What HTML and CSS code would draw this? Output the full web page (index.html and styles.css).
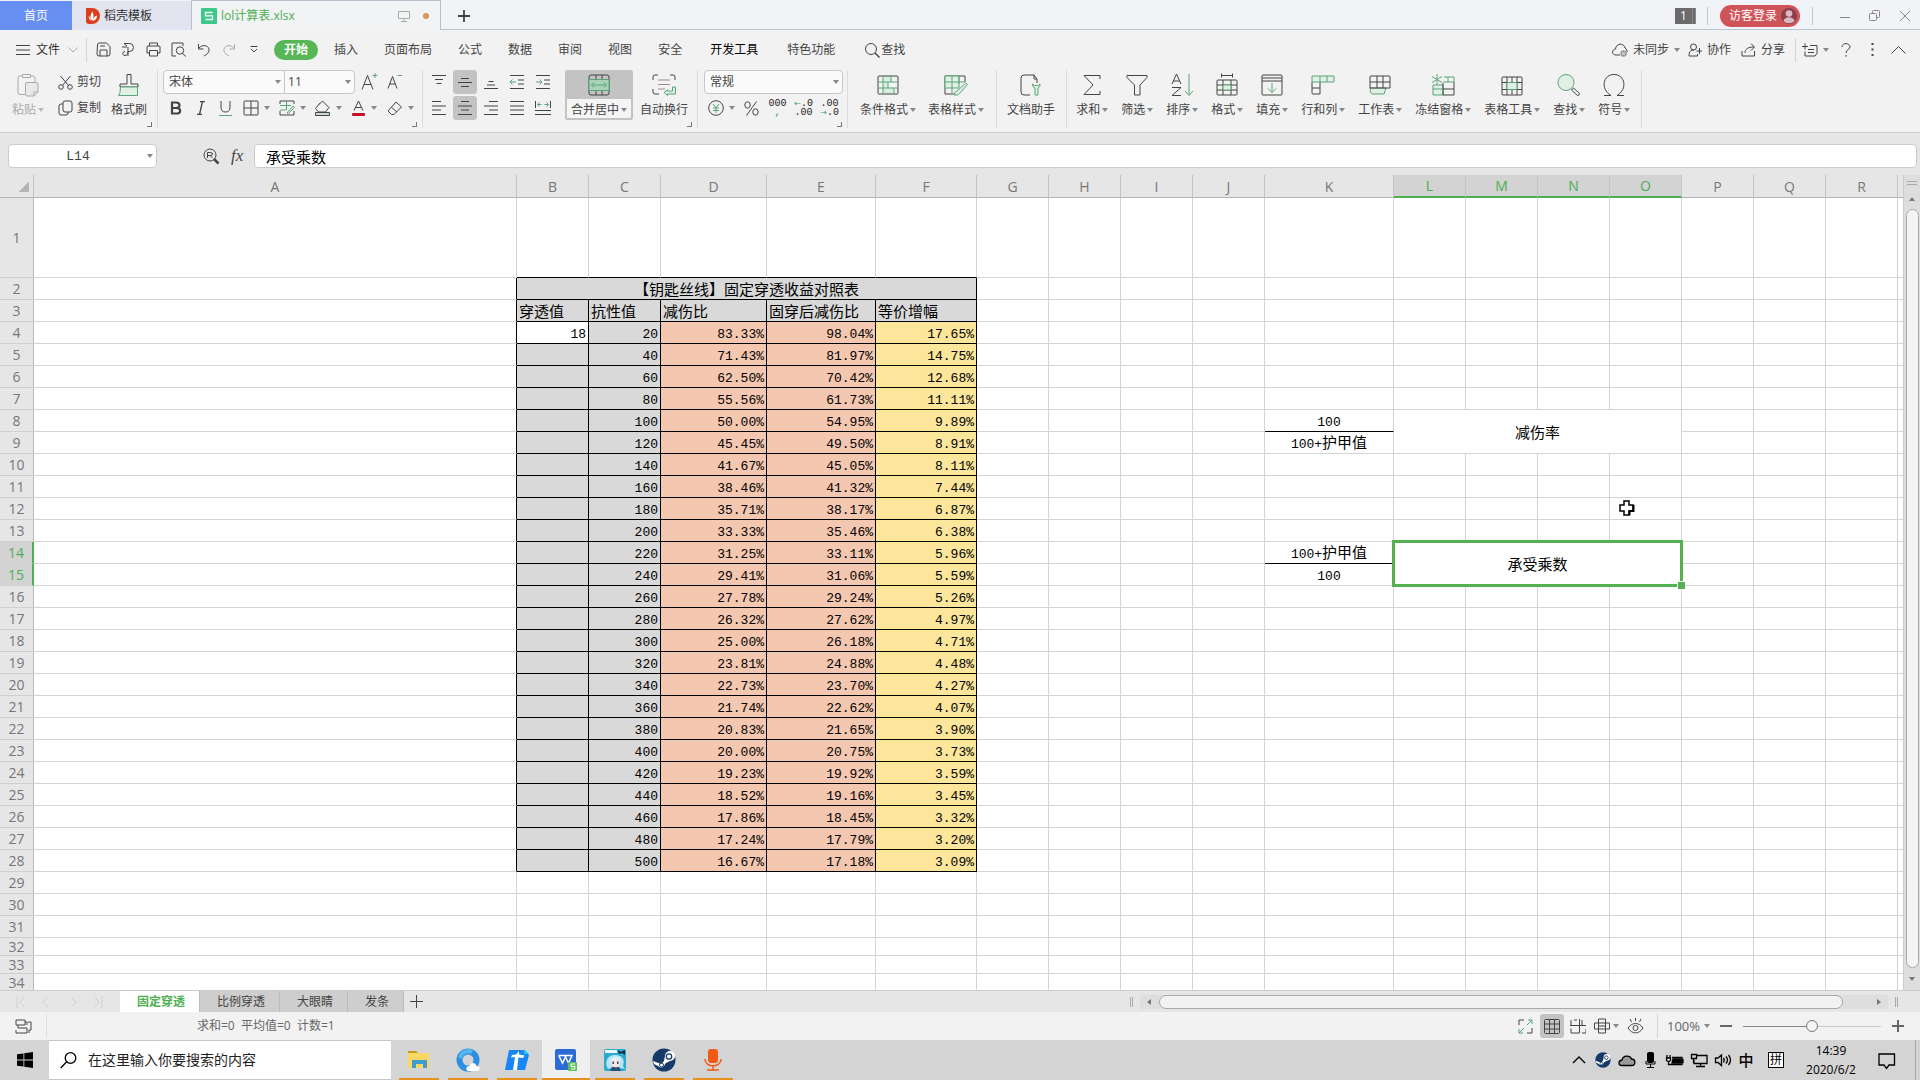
FILE: index.html
```html
<!DOCTYPE html>
<html lang="zh-CN">
<head>
<meta charset="utf-8">
<title>lol计算表.xlsx</title>
<link rel="stylesheet" href="styles.css">
</head>
<body>
<header class="titlebar">
  <button class="tab tab-home">首页</button>
  <button class="tab tab-docer">
    <svg width="14" height="16" viewBox="0 0 14 16"><path d="M0 0h6a8 8 0 0 1 0 16H3a3 3 0 0 1-3-3z" fill="#dd3d1f"/><path d="M6.500 12.500C4 11 3.500 8 6.500 3.500c1 3 1.500 5 0 9zM6.500 13c.5-3 2-5 4.500-5.500 0 3-1.500 5-4.500 5.500zM5.500 13C3.500 12 2.500 10 2.800 7.500" fill="#fff"/></svg>
    稻壳模板</button>
  <div class="tab tab-file">
    <svg width="16" height="16" viewBox="0 0 16 16"><rect width="16" height="16" rx="1" fill="#3dc78a"/><path d="M11.500 4.500h-7v3.300h7v3.700h-7" fill="none" stroke="#fff" stroke-width="1.300"/></svg>
    <span class="grow">lol计算表.xlsx</span>
    <svg width="12" height="12" viewBox="0 0 12 12" class="ln pale"><path d="M.5 1.500h11v7H.5zM6 8.500v3M3 11.500h6"/></svg>
    <i class="dot"></i>
  </div>
  <button class="newtab" aria-label="新建"><svg width="12" height="12" viewBox="0 0 12 12" class="ln"><path d="M6 0v12M0 6h12" stroke-width="1.800"/></svg></button>
  <div class="grow"></div>
  <span class="count"><b>1</b></span>
  <i class="vsep short"></i>
  <button class="login">访客登录
    <svg width="16" height="16" viewBox="0 0 16 16"><circle cx="8" cy="8" r="8" fill="#8d3e4c"/><circle cx="8" cy="5.500" r="3.300" fill="#dcb9c2"/><path d="M2.500 13c1-5 10-5 11 0a8 8 0 0 1-11 0z" fill="#dcb9c2"/></svg>
  </button>
  <i class="vsep short"></i>
  <button class="win" aria-label="最小化"><svg width="10" height="12" viewBox="0 0 10 12" class="ln gray"><path d="M0 7.500h10"/></svg></button>
  <button class="win" aria-label="还原"><svg width="12" height="12" viewBox="0 0 12 12" class="ln gray"><rect x=".5" y="3.500" width="7" height="7" rx="1"/><path d="M3.500 3V1.500q0-1 1-1h5q1 0 1 1v5q0 1-1 1H8"/></svg></button>
  <button class="win" aria-label="关闭"><svg width="12" height="12" viewBox="0 0 12 12" class="ln gray"><path d="M1 1l10 10M11 1L1 11"/></svg></button>
</header>

<nav class="menubar">
  <button class="filebtn"><svg width="14" height="12" viewBox="0 0 14 12" class="ln"><path d="M0 1.500h14M0 6h14M0 10.500h14"/></svg>文件<svg width="10" height="6" viewBox="0 0 10 6" class="ln pale chev"><path d="M.5.5L5 5 9.500.5"/></svg></button>
  <i class="vsep"></i>
  <div class="quick">
    <button aria-label="保存"><svg width="15" height="15" viewBox="0 0 15 15" class="ln"><path d="M1.500 3q0-2 2-2h7l3.500 3.500V12q0 2-2 2H3q-2 0-2-2zM4 14V8h7v6M4 4h5"/></svg></button>
    <button aria-label="输出为PDF"><svg width="15" height="15" viewBox="0 0 15 15" class="ln"><path d="M3 1.500h5.500a4 4 0 0 1 0 8H7M3 1.500L6 4M7 14V5M4 9.500c-3 0-3 4 0 4 2 0 3-1.500 3-4M1 5h5"/></svg></button>
    <button aria-label="打印"><svg width="15" height="15" viewBox="0 0 15 15" class="ln"><path d="M3.500 4V1h8v3M3.500 11H1V5q0-1 1-1h11q1 0 1 1v6h-2.500M3.500 8.500h8V14h-8z"/></svg></button>
    <button aria-label="打印预览"><svg width="16" height="15" viewBox="0 0 16 15" class="ln"><path d="M5 14H1V1h11v3"/><circle cx="9" cy="8.500" r="3.700"/><path d="M11.500 11.500L15 14.500"/></svg></button>
    <button aria-label="撤销"><svg width="14" height="14" viewBox="0 0 14 14" class="ln"><path d="M1.500 1v5h5M1.500 5.500C6 0 13 3 12 8c-.4 2-3 4-5 5"/></svg></button>
    <button aria-label="恢复"><svg width="14" height="14" viewBox="0 0 14 14" class="ln pale"><path d="M12.500 1v5h-5M12.500 5.500C8 0 1 3 2 8c.4 2 3 4 5 5"/></svg></button>
    <button aria-label="自定义"><svg width="8" height="8" viewBox="0 0 8 8" class="ln"><path d="M.5.500h7M1 3l3 3 3-3"/></svg></button>
  </div>
  <button class="menu on">开始</button>
  <button class="menu">插入</button>
  <button class="menu">页面布局</button>
  <button class="menu">公式</button>
  <button class="menu">数据</button>
  <button class="menu">审阅</button>
  <button class="menu">视图</button>
  <button class="menu">安全</button>
  <button class="menu wide dark">开发工具</button>
  <button class="menu wide">特色功能</button>
  <button class="menu wide find"><svg width="16" height="16" viewBox="0 0 16 16" class="ln"><circle cx="7" cy="7" r="5.500"/><path d="M11 11l4.500 4.500" stroke-width="1.500"/></svg>查找</button>
  <div class="grow"></div>
  <button class="side sync"><svg width="16" height="14" viewBox="0 0 16 14" class="ln"><path d="M8 12H4C-.5 12-.5 6.500 3.500 6 4 0 12-.5 13 5c2 1 2.500 3 1.500 4.500"/><circle cx="11.500" cy="10.500" r="3.200" fill="#999" stroke="none"/><path d="M10.300 9.300l2.400 2.400M12.700 9.300l-2.400 2.400" stroke="#fff"/></svg>未同步<i class="caret"></i></button>
  <button class="side"><svg width="14" height="14" viewBox="0 0 14 14" class="ln"><circle cx="5.500" cy="4" r="3"/><path d="M1 13c0-5 2-6 5-6M1 13h8.500v-2M11.500 5v6M8.500 8H14"/></svg>协作</button>
  <button class="side"><svg width="15" height="14" viewBox="0 0 15 14" class="ln"><path d="M1 8v5h12.500V8M4 10c0-4 3-6 9-6M10 .5L13.500 4 10 7.500"/></svg>分享</button>
  <i class="vsep"></i>
  <button class="side addnote" aria-label="批注"><svg width="16" height="14" viewBox="0 0 16 14" class="ln"><path d="M0 3.500h6M3 .5v6M8 2.500h7v8l-2 2.500H3V8.500M6 6.500h6M6 9.500h6"/></svg><i class="caret"></i></button>
  <button class="side help" aria-label="帮助"><svg width="10" height="14" viewBox="0 0 10 14" class="ln"><path d="M1 4c0-4.500 8-4.500 8 0C9 6.500 5 6.500 5 10M5 12v1.800"/></svg></button>
  <button class="side more" aria-label="更多"><svg width="3" height="13" viewBox="0 0 3 13"><path d="M.5 0h2v2h-2zM.5 5.500h2v2h-2zM.5 11h2v2h-2z" fill="#444"/></svg></button>
  <button class="side fold" aria-label="折叠"><svg width="15" height="8" viewBox="0 0 15 8" class="ln"><path d="M.5 7.500l7-7 7 7"/></svg></button>
</nav>

<section class="ribbon">
  <div class="group clip">
    <button class="big off"><svg width="22" height="24" viewBox="0 0 22 24" class="ln"><path d="M8 21.500H3q-2 0-2-2V5q0-2 2-2h2M14 3h2q2 0 2 2v4M5.500 1.500h8v3h-8z"/><path d="M8.500 11q0-1.500 1.500-1.500h9.500q1.500 0 1.500 1.500v8l-4 4h-7q-1.500 0-1.500-1.500zM21 19h-4v4" fill="#e8e8e8"/></svg><span>粘贴<i class="caret"></i></span></button>
    <div class="stack">
      <button class="small"><svg width="15" height="15" viewBox="0 0 15 15" class="ln"><circle cx="3" cy="12" r="2.300"/><circle cx="12" cy="12" r="2.300"/><path d="M4.500 10.500L12.500 1M10.500 10.500L2.500 1"/></svg>剪切</button>
      <button class="small"><svg width="15" height="16" viewBox="0 0 15 16" class="ln"><rect x="5" y="1" width="9" height="11" rx="2"/><path d="M5 4H3Q1 4 1 6v7q0 2 2 2h5q2 0 2-2v-1"/></svg>复制</button>
    </div>
    <button class="big"><svg width="22" height="24" viewBox="0 0 22 24" class="ln"><path d="M9 1.500h4V11h7v3H2v-3h7z"/><path d="M2.500 14h17v8.500h-19Q2.500 21 2.500 14z" class="g"/></svg><span>格式刷</span></button>
    <i class="corner"></i>
  </div>
  <div class="group font">
    <div class="row">
      <label class="combo name"><select aria-label="字体"><option>宋体</option></select><i class="caret"></i></label>
      <label class="combo size"><select aria-label="字号"><option>11</option></select><i class="caret"></i></label>
      <button class="tool" aria-label="增大字号"><svg width="17" height="18" viewBox="0 0 17 18" class="ln"><path d="M1 16.500L6.500 2.500 12 16.500M3 11.500h7"/><path d="M14 0v5M11.500 2.500h5" class="gl"/></svg></button>
      <button class="tool" aria-label="减小字号"><svg width="17" height="18" viewBox="0 0 17 18" class="ln"><path d="M2 15.500L6.500 3.500 11 15.500M3.500 11h6"/><path d="M11.500 2.500h4.500" class="gl"/></svg></button>
    </div>
    <div class="row">
      <button class="tool" aria-label="加粗"><svg width="12" height="14" viewBox="0 0 12 14" class="ln"><path d="M2 1.500h4q3.500 0 3.500 2.700T6 7H2zM2 7h4.500q3.700 0 3.700 2.800T6.500 12.500H2z" stroke-width="2.200"/></svg></button>
      <button class="tool" aria-label="倾斜"><svg width="10" height="14" viewBox="0 0 10 14" class="ln"><path d="M4 .5h5M1 13.500h5M6.500.5l-3 13" stroke-width="1.300"/></svg></button>
      <button class="tool" aria-label="下划线"><svg width="13" height="15" viewBox="0 0 13 15" class="ln"><path d="M2 0v6q0 5 4.500 5T11 6V0"/><path d="M0 14.500h13" class="gl"/></svg></button>
      <button class="tool drop" aria-label="边框"><svg width="16" height="16" viewBox="0 0 16 16" class="ln"><rect x="1" y="1" width="14" height="14" rx="1"/><path d="M8 1v14M1 8h14"/></svg><i class="caret"></i></button>
      <button class="tool drop" aria-label="绘图边框"><svg width="16" height="16" viewBox="0 0 16 16" class="ln"><path d="M15 4V1H1v3M1 11v4h14v-4"/><path d="M1 5.500h11M1 10h6M7.500 1v9" class="gl"/><path d="M8 13l6-7 1.500 1.500-6 6z" class="g"/></svg><i class="caret"></i></button>
      <button class="tool drop" aria-label="填充颜色"><svg width="17" height="16" viewBox="0 0 17 16" class="ln"><path d="M5 4.500L8.500 1l6.500 6.500M6 3L1.500 8.500 4.500 12h7l3.500-4.500"/><path d="M1.500 12.500h14v3h-14z" fill="#c9dccf"/></svg><i class="caret"></i></button>
      <button class="tool drop" aria-label="字体颜色"><svg width="15" height="16" viewBox="0 0 15 16" class="ln"><path d="M3 10.500L7.500 1 12 10.500M4.500 7.500h6"/><rect x="1" y="13" width="13" height="3" rx="1" fill="#c8102e" stroke="none"/></svg><i class="caret"></i></button>
      <button class="tool drop" aria-label="清除"><svg width="16" height="16" viewBox="0 0 16 16" class="ln"><path d="M9 2l5.500 5L7 14.500H4.500L1 11zM4.500 7.500l5.500 4.500"/></svg><i class="caret"></i></button>
    </div>
    <i class="corner"></i>
  </div>
  <div class="group align">
    <div class="pads">
      <button><svg width="14" height="14" viewBox="0 0 14 14" class="ln"><path d="M0 .5h14M3 4.500h8M4.500 8.500h5"/></svg></button>
      <button class="on"><svg width="14" height="14" viewBox="0 0 14 14" class="ln"><path d="M3 3.500h8M0 7.500h14M3 11.500h8"/></svg></button>
      <button><svg width="14" height="14" viewBox="0 0 14 14" class="ln"><path d="M4.500 6.500h5M3 10h8M0 13.500h14"/></svg></button>
      <button><svg width="14" height="14" viewBox="0 0 14 14" class="ln"><path d="M0 .5h14M8 5h6M8 9h6M0 13.500h14"/><path d="M0 7h6M2.500 4.500L0 7l2.500 2.500" class="gl"/></svg></button>
      <button><svg width="14" height="14" viewBox="0 0 14 14" class="ln"><path d="M0 .5h14M8 5h6M8 9h6M0 13.500h14"/><path d="M0 7h6M3.500 4.500L6 7 3.500 9.500" class="gl"/></svg></button>
      <button><svg width="14" height="14" viewBox="0 0 14 14" class="ln"><path d="M0 .5h9M0 5h14M0 9h9M0 13.500h14"/></svg></button>
      <button class="on"><svg width="14" height="14" viewBox="0 0 14 14" class="ln"><path d="M3 .5h8M0 5h14M3 9h8M0 13.500h14"/></svg></button>
      <button><svg width="14" height="14" viewBox="0 0 14 14" class="ln"><path d="M5 .5h9M0 5h14M5 9h9M0 13.500h14"/></svg></button>
      <button><svg width="14" height="14" viewBox="0 0 14 14" class="ln"><path d="M0 .5h14M0 5h14M0 9h14M0 13.500h14"/></svg></button>
      <button><svg width="16" height="14" viewBox="0 0 16 14" class="ln"><path d="M.5 0v7M15.500 0v7M0 9.500h16M0 13.500h16"/><path d="M2.500 3.500h4M4.500 1.500l-2 2 2 2M9.500 3.500h4M11.500 1.500l2 2-2 2" class="gl"/></svg></button>
    </div>
    <button class="big merge"><svg width="22" height="22" viewBox="0 0 22 22" class="ln"><rect x="1" y="1" width="20" height="20" rx="2"/><path d="M8 1v4M14 1v4M8 17v4M14 17v4"/><path d="M1 5.500h20v11H1zM4 11h14M6 8.500L3.500 11 6 13.500M16 8.500l2.500 2.500-2.500 2.500" class="m"/></svg><span>合并居中<i class="caret"></i></span></button>
    <button class="big"><svg width="24" height="22" viewBox="0 0 24 22" class="ln"><path d="M6 1H3Q1 1 1 3v3M18 1h3q2 0 2 2v3M1 15v3q0 2 2 2h4"/><path d="M6 6h12M6 10.500h12M6 15h7" stroke="#a08a90"/><path d="M23.500 13v7h-8v1.500L12 18.500l3.500-2.500V17h5v-4z" class="g"/></svg><span>自动换行</span></button>
    <i class="corner"></i>
  </div>
  <div class="group number">
    <div class="row">
      <label class="combo fmt"><select aria-label="数字格式"><option>常规</option></select><i class="caret"></i></label>
    </div>
    <div class="row">
      <button class="tool drop" aria-label="会计格式"><svg width="16" height="16" viewBox="0 0 16 16" class="ln"><circle cx="8" cy="8" r="7.300"/><path d="M5 4l3 4 3-4M8 8v5M5 8h6M5 10.500h6" class="gl"/></svg><i class="caret"></i></button>
      <button class="tool" aria-label="百分比"><svg width="15" height="15" viewBox="0 0 15 15" class="ln"><path d="M12.500.5l-10 14"/><ellipse cx="3.500" cy="4" rx="2.700" ry="3.200"/><ellipse cx="11.500" cy="11" rx="2.700" ry="3.200"/></svg></button>
      <button class="tool digits">000<small class="green">,</small></button>
      <button class="tool digits"><span><em class="green">←</em>.0</span>.00</button>
      <button class="tool digits">.00<span><em class="green">→</em>.0</span></button>
    </div>
    <i class="corner"></i>
  </div>
  <div class="group tools">
    <button class="big"><svg width="22" height="22" viewBox="0 0 22 22" class="ln"><path d="M7 1h8v7h-4v6h6v6H6V1z" fill="#d7efdf" stroke="none"/><rect x="1" y="2" width="20" height="18" rx="1"/><path d="M6 2v18M1 8h20M1 14h20M14 2v6M11 8v6M17 14v6" class="gl"/></svg><span>条件格式<i class="caret"></i></span></button>
    <button class="big"><svg width="24" height="22" viewBox="0 0 24 22" class="ln"><path d="M10 20H1V2h20v6"/><path d="M1 2h14v12H1z" class="g"/><path d="M8 2v17M1 8h20M15 2v8" class="gl"/><path d="M10 21q1-4 3-4l9-8 1.500 1.500-8 9q-1 2-5.500 1.500z" class="g"/></svg><span>表格样式<i class="caret"></i></span></button>
  </div>
  <div class="group tools">
    <button class="big"><svg width="22" height="22" viewBox="0 0 22 22" class="ln"><path d="M10 21H4q-3 0-3-3V4q0-3 3-3h10l3 4v4M14 1v4h3"/><path d="M15 21v-7q-3-1-2.500-4l2 1.500h3.500l2-1.500q.5 3-2 4v7z" class="g"/></svg><span>文档助手</span></button>
  </div>
  <div class="group tools last">
    <button class="big"><svg width="20" height="22" viewBox="0 0 20 22" class="ln"><path d="M18 5V1.500H2L11 11 2 20.500h16V17"/></svg><span>求和<i class="caret"></i></span></button>
    <button class="big"><svg width="22" height="22" viewBox="0 0 22 22" class="ln"><path d="M1 1.500h20v2l-7 7.500v10H8.500V11L1 3.500z"/></svg><span>筛选<i class="caret"></i></span></button>
    <button class="big"><svg width="24" height="24" viewBox="0 0 24 24" class="ln"><path d="M2 11L6.500 1 11 11M3.500 8h6M2 14.500h9l-9 8h9"/><path d="M19 1v21M15 18l4 4.500 4-4.500" class="gl"/></svg><span>排序<i class="caret"></i></span></button>
    <button class="big"><svg width="22" height="24" viewBox="0 0 22 24" class="ln"><path d="M5.500 2.500h11M5.500.5v4M16.500.5v4"/><rect x="1" y="7" width="20" height="15" rx="1"/><path d="M7 7v15M15 7v15M1 12h20M1 17h20"/><path d="M7 12h8v5H7z" class="g"/></svg><span>格式<i class="caret"></i></span></button>
    <button class="big"><svg width="22" height="22" viewBox="0 0 22 22" class="ln"><rect x="1" y="1" width="20" height="20" rx="1"/><path d="M1 4h20M1 7h20"/><path d="M11 9v9M7 14.500l4 4 4-4" class="gl"/></svg><span>填充<i class="caret"></i></span></button>
    <button class="big"><svg width="24" height="22" viewBox="0 0 24 22" class="ln"><path d="M1 8v11q0 1 1 1h7V8M1 14h8"/><path d="M1 2h22v6H1zM9 2v6M16 2v6" class="g"/></svg><span>行和列<i class="caret"></i></span></button>
    <button class="big"><svg width="22" height="22" viewBox="0 0 22 22" class="ln"><path d="M1 14h16l-2 6H3q-2 0-2-6z" class="g"/><path d="M1 14V3q0-1 1-1h18q1 0 1 1v11zM1 8h20M8 2v12M14 2v12"/></svg><span>工作表<i class="caret"></i></span></button>
    <button class="big"><svg width="24" height="24" viewBox="0 0 24 24" class="ln"><path d="M2 12h10v10H2z" class="g"/><path d="M12 22h11V9M12 16h11M12 10v12"/><path d="M13 4h10v5H12M17 4v5M6 1v11M1 3.500l10 6M11 3.500l-10 6M2 16h10" class="gl"/></svg><span>冻结窗格<i class="caret"></i></span></button>
    <button class="big"><svg width="22" height="22" viewBox="0 0 22 22" class="ln"><rect x="1" y="3" width="20" height="18" rx="1"/><path d="M6 3v18M16 3v18M11 3v5M11 16v5M1 8.500h20M1 15.500h20"/><path d="M6 8.500h10v7H6z" class="g"/></svg><span>表格工具<i class="caret"></i></span></button>
    <button class="big"><svg width="24" height="23" viewBox="0 0 24 23" class="ln"><circle cx="9" cy="9" r="8" class="g"/><path d="M14.500 16.500l2-2 6 5.500q0 2-2 2z"/></svg><span>查找<i class="caret"></i></span></button>
    <button class="big"><svg width="22" height="24" viewBox="0 0 22 24" class="ln"><path d="M1 22.500h7C-3 16 0 1.500 11 1.500S25 16 14 22.500h7"/></svg><span>符号<i class="caret"></i></span></button>
  </div>
</section>

<section class="formula">
  <label class="namebox"><input value="L14" aria-label="名称框"><i class="caret"></i></label>
  <button class="look" aria-label="浏览"><svg width="17" height="17" viewBox="0 0 17 17" class="ln"><circle cx="7" cy="7" r="6"/><path d="M11 11l4.500 4.500" stroke-width="2.500"/><path d="M4.500 10V4.500h3q2 0 2 1.500t-2 1.500h-3M7 7.500L9.500 10M4.500 7.500h3"/></svg></button>
  <button class="fx">fx</button>
  <input class="expr" value="承受乘数" aria-label="编辑栏">
</section>

<main class="sheet">
  <div class="canvas">
    <table class="grid" id="grid"></table>
    <svg class="cursor" width="16" height="16" viewBox="0 0 16 16"><path d="M5 1h5v4h4v6h-4v4H5v-4H1V5h4z" fill="#fff" stroke="#000" stroke-width="1.500"/><path d="M10.500 15.200V11H14.500V5" fill="none" stroke="#000" stroke-width="2"/></svg>
  </div>
  <div class="vscroll">
    <i class="grip"></i><i class="arrow up"></i><i class="thumb"></i><i class="arrow down"></i>
  </div>
</main>

<div class="sheetbar">
  <div class="navs">
    <svg width="88" height="14" viewBox="0 0 88 14" class="ln"><path d="M1 1v12M8 2L4 7l4 5M32 2l-5 5 5 5M55 2l5 5-5 5M79 2l4 5-4 5M86 1v12"/></svg>
  </div>
  <button class="stab on">固定穿透</button><button class="stab">比例穿透</button><button class="stab">大眼睛</button><button class="stab">发条</button>
  <button class="addsheet" aria-label="新建工作表"><svg width="13" height="13" viewBox="0 0 13 13" class="ln"><path d="M6.500 0v13M0 6.500h13"/></svg></button>
  <div class="grow"></div>
  <div class="hscroll"><i class="vgrip"></i><div class="track"><i class="arrow left"></i><i class="hthumb"></i><i class="arrow right"></i></div><i class="vgrip"></i></div>
</div>

<footer class="status">
  <svg width="17" height="15" viewBox="0 0 17 15" class="ln"><path d="M1 1h9v5H1zM3 9h9v5H1v-3M3 6v3M10 3h2M13 3h3v8h-2v3M12 3v3"/></svg>
  <i class="vsep"></i>
  <span class="sum">求和=0&nbsp; 平均值=0&nbsp; 计数=1</span>
  <div class="grow"></div>
  <div class="views">
    <button><svg width="15" height="15" viewBox="0 0 15 15" class="ln"><path d="M1 6V1h5M14 9v5H9"/><path d="M9 6l5-5M10 1h4v4M6 9l-5 5M1 10v4h4" class="gl"/></svg></button>
    <button class="on"><svg width="16" height="15" viewBox="0 0 16 15" class="ln"><rect x=".5" y=".5" width="15" height="14" rx="1"/><path d="M5.500.5v14M10.500.5v14M.5 5h15M.5 10h15"/></svg></button>
    <button><svg width="16" height="15" viewBox="0 0 16 15" class="ln"><path d="M1 1v5.500h4M1 9.500V14h8.500V0M4 1h3M12 1v5.500h4M0 6.500h16M12 14h4v-4"/></svg></button>
    <button class="withcaret"><svg width="16" height="16" viewBox="0 0 16 16" class="ln"><path d="M4.500 1h7v14h-7zM.5 5h15v6H.5zM4.500 8h7M4.500 5v6"/></svg><i class="caret"></i></button>
    <button><svg width="17" height="16" viewBox="0 0 17 16" class="ln"><path d="M1 10c4-6 11-6 15 0-4 6.500-11 6.500-15 0zM8.500 0v3M3 1l1.500 3M14 1l-1.500 3"/><circle cx="8.500" cy="10" r="2.500"/></svg></button>
  </div>
  <i class="vsep"></i>
  <button class="pct">100%<i class="caret"></i></button>
  <button class="zb" aria-label="缩小"><svg width="12" height="12" viewBox="0 0 12 12" class="ln"><path d="M0 6h12" stroke-width="2"/></svg></button>
  <input class="zoom" type="range" min="0" max="100" value="50" aria-label="缩放">
  <button class="zb" aria-label="放大"><svg width="12" height="12" viewBox="0 0 12 12" class="ln"><path d="M0 6h12M6 0v12" stroke-width="2"/></svg></button>
</footer>

<div class="taskbar">
  <button class="start" aria-label="开始菜单"><svg width="16" height="16" viewBox="0 0 16 16"><path d="M0 2.300L6.500 1.400v6.200H0zM7.300 1.300L16 0v7.600H7.300zM0 8.400h6.500v6.200L0 13.700zM7.300 8.400H16V16l-8.700-1.300z"/></svg></button>
  <label class="search"><svg width="17" height="17" viewBox="0 0 17 17" class="ln blk"><circle cx="10.500" cy="6" r="5.300"/><path d="M6.700 9.700L.7 16"/></svg><input placeholder="在这里输入你要搜索的内容" aria-label="搜索"></label>
  <div class="apps">
    <button aria-label="文件资源管理器"><svg width="24" height="24" viewBox="0 0 24 24"><path d="M1 3h8l2 2H1z" fill="#c79a1c"/><path d="M1 5h21v15H1z" fill="#f9d765"/><path d="M5 20v-8h15v8h-4v-4H9v4z" fill="#3f9bd0"/></svg></button>
    <button aria-label="浏览器"><svg width="24" height="24" viewBox="0 0 24 24"><circle cx="12" cy="12" r="8.500" fill="none" stroke="#2c8fe2" stroke-width="6"/><path d="M4 10a8.500 8.500 0 0 1 12-6" fill="none" stroke="#54b6ef" stroke-width="4"/><path d="M12 23c-3-1-2-5 1.500-5 1-4 6-4 7 0 4 0 4 5 0 5z" fill="#fff"/></svg></button>
    <button aria-label="对战平台"><svg width="24" height="24" viewBox="0 0 24 24"><path d="M4 2h15l5 5-4 15H0z" fill="#1787f5"/><path d="M19 1l5 5h-5z" fill="#27c7f5"/><path d="M14 3v3.500l5.500 1L18 10l-4.500-.5L12 22H8l2-13-4 .5 1-2.500 4-.5z" fill="#fff"/></svg></button>
    <button class="on" aria-label="WPS"><svg width="24" height="24" viewBox="0 0 24 24"><rect x="1" y="1" width="21" height="21" rx="2" fill="#2c6bd6"/><path d="M4.500 7.500H18L14.500 15 11 8M5 8l3.500 7L12 8" fill="none" stroke="#fff" stroke-width="1.500"/><rect x="14" y="14" width="9" height="9" rx="1" fill="#5cc05a"/><path d="M21 16h-4v2.500h4V21h-4" fill="none" stroke="#fff"/></svg></button>
    <button aria-label="直播姬"><svg width="24" height="24" viewBox="0 0 24 24"><rect x="1" y="1" width="22" height="22" rx="2" fill="#2ba9cf"/><path d="M2 2h12v3H2z" fill="#e8f8fc"/><path d="M5 21c-4-6-1-14 7-14s10 5 8 11l2 3-5-1H8z" fill="#b7e5f3"/><path d="M8 12h9q0 7-4.500 7T8 12z" fill="#fbe4dc"/><path d="M7 14c1-6 10-7 11-1l-3-2-4 2-2-1z" fill="#dff3fa"/><path d="M9.500 13.500h1.500v2.500H9.500zM14 13.500h1.500v2.500H14z" fill="#2a4a80"/><path d="M9 19h7l2 4H7z" fill="#24507f"/><path d="M12 19l1 2 1-2z" fill="#e2685c"/><path d="M15 2l3 2 4-2v5l-3-2-3 1z" fill="#1c2738"/></svg></button>
    <button aria-label="Steam"><svg width="24" height="24" viewBox="0 0 24 24"><use href="#steam"/></svg></button>
    <button aria-label="录音"><svg width="24" height="24" viewBox="0 0 24 24"><rect x="7" y="1" width="10" height="14" rx="3" fill="#f05a14"/><path d="M4 11c0 9 16 9 16 0M12 18v4M6 22h12" fill="none" stroke="#f05a14" stroke-width="1.500"/></svg></button>
  </div>
  <div class="grow"></div>
  <div class="tray">
    <svg width="24" height="18" viewBox="0 0 24 18" class="ln blk"><path d="M6 12l6-6 6 6"/></svg>
    <svg width="24" height="16" viewBox="-6 0 36 24"><defs><g id="steam"><circle cx="12" cy="12" r="11.500" fill="#173a68"/><path d="M1 13l8 3 3-3 1-5a5 5 0 1 1 5 5l-4 2-1 1a4 4 0 0 1-7 2l-4-2z" fill="#fff"/><circle cx="17" cy="8.500" r="2.700" fill="#fff" stroke="#173a68" stroke-width="1.300"/><circle cx="9.500" cy="17" r="2" fill="none" stroke="#173a68"/></g></defs><use href="#steam"/></svg>
    <svg width="24" height="18" viewBox="0 0 24 18" class="ln blk"><path d="M7 14.500c-4 0-4-5 0-5.500 1-5 8-5 9.500-1 4.500 0 4.500 6.500 0 6.500z" fill="#9a9a9a"/></svg>
    <svg width="24" height="18" viewBox="0 0 24 18"><rect x="8" y="1" width="7" height="11" rx="2"/><path d="M7 10v3h9v-3M11.500 13v3M8 16.500h7" fill="none" stroke="#000"/></svg>
    <svg width="24" height="18" viewBox="0 0 24 18" class="ln blk"><path d="M9 6.500h10v7H8"/><path d="M10 8h7.500v4H9zM19 8.500h1v3h-1z" fill="#000"/><path d="M4 4v3M7 4v3M3.500 7h4v2.500l-2 1.500-2-1.500zM5.500 11v2.500H8"/></svg>
    <svg width="24" height="18" viewBox="0 0 24 18" class="ln blk"><path d="M9 4.500h11v8H7V9M13.500 12.500v3M9 15.500h9M4.500 3.500h5v4h-5zM6.500 7.500V12"/></svg>
    <svg width="24" height="18" viewBox="0 0 24 18" class="ln blk"><path d="M4.500 7v4.500H7l3.500 3V4L7 7zM12.500 7q1.500 2 0 4.500M15 5.500q3 3.500 0 7M17.500 4q4 5 0 10"/></svg>
    <span class="lang">中</span>
    <span class="ime">拼</span>
    <span class="clock">14:39<br>2020/6/2</span>
    <svg width="18" height="17" viewBox="0 0 18 17" class="ln blk note"><path d="M1 1h15.500v11H11l-2.500 3.500L6 12H1z"/></svg>
  </div>
</div>
<script src="grid.js"></script>
</body>
</html>
```
FILE: grid.js
```js
const columns = {A: 483, B: 72, C: 72, D: 106, E: 109, F: 101, G: 72, H: 72, I: 72, J: 72,
  K: 129, L: 72, M: 72, N: 72, O: 72, P: 72, Q: 72, R: 72, '': 72};
const names = Object.keys(columns);
const reduced = ['83.33', '71.43', '62.50', '55.56', '50.00', '45.45', '41.67', '38.46', '35.71', '33.33',
  '31.25', '29.41', '27.78', '26.32', '25.00', '23.81', '22.73', '21.74', '20.83', '20.00',
  '19.23', '18.52', '17.86', '17.24', '16.67'];
const pierced = ['98.04', '81.97', '70.42', '61.73', '54.95', '49.50', '45.05', '41.32', '38.17', '35.46',
  '33.11', '31.06', '29.24', '27.62', '26.18', '24.88', '23.70', '22.62', '21.65', '20.75',
  '19.92', '19.16', '18.45', '17.79', '17.18'];
const gain = ['17.65', '14.75', '12.68', '11.11', '9.89', '8.91', '8.11', '7.44', '6.87', '6.38',
  '5.96', '5.59', '5.26', '4.97', '4.71', '4.48', '4.27', '4.07', '3.90', '3.73',
  '3.59', '3.45', '3.32', '3.20', '3.09'];

const cells = {
  B2: {text: '【钥匙丝线】固定穿透收益对照表', cls: 'gray mid', cols: 5},
  B3: {text: '穿透值', cls: 'gray'}, C3: {text: '抗性值', cls: 'gray'}, D3: {text: '减伤比', cls: 'gray'},
  E3: {text: '固穿后减伤比', cls: 'gray'}, F3: {text: '等价增幅', cls: 'gray'},
  K8: {text: '100', cls: 'mid num over'}, K9: {text: '<b>100+</b>护甲值', cls: 'mid'},
  K14: {text: '<b>100+</b>护甲值', cls: 'mid over'}, K15: {text: '100', cls: 'mid num'},
  L8: {text: '减伤率', cls: 'mid', cols: 4, rows: 2},
  L14: {text: '承受乘数<i class="selection"></i>', cls: 'mid selected', cols: 4, rows: 2}
};
reduced.forEach((value, i) => {
  const r = i + 4;
  cells['B' + r] = {text: i ? '' : '18', cls: i ? 'gray' : 'num'};
  cells['C' + r] = {text: String((i + 1) * 20), cls: 'gray num'};
  cells['D' + r] = {text: value + '%', cls: 'pink num'};
  cells['E' + r] = {text: pierced[i] + '%', cls: 'pink num'};
  cells['F' + r] = {text: gain[i] + '%', cls: 'yellow num'};
});

let html = '<colgroup><col style="width:34px">' +
  names.map(n => `<col style="width:${columns[n]}px">`).join('') + '</colgroup><thead><tr><th class="all"></th>' +
  names.map(n => `<th scope="col"${n && 'LMNO'.includes(n) ? ' class="sel"' : ''}>${n}</th>`).join('') + '</tr></thead><tbody>';
const covered = new Set();
for (let r = 1; r <= 34; r++) {
  const kind = r === 1 ? 'tall' : r > 31 ? 'low' : '';
  html += `<tr class="${kind}"><th scope="row"${r === 14 || r === 15 ? ' class="sel"' : ''}>${r}</th>`;
  names.forEach((n, c) => {
    if (covered.has(n + r)) return;
    const cell = cells[n + r] || {text: '', cls: ''};
    for (let y = 0; y < (cell.rows || 1); y++)
      for (let x = 0; x < (cell.cols || 1); x++) covered.add(names[c + x] + (r + y));
    const cls = [cell.cls];
    if (c >= 1 && c <= 5 && r >= 2 && r <= 28) cls.push('box');
    if (c >= 1 && c <= 5 && r === 1) cls.push('over');
    if (c === 0 && r >= 2 && r <= 28) cls.push('before');
    html += `<td class="${cls.join(' ').trim()}" colspan="${cell.cols || 1}" rowspan="${cell.rows || 1}">${cell.text}</td>`;
  });
  html += '</tr>';
}
document.getElementById('grid').innerHTML = html + '</tbody>';
```
FILE: styles.css
```css
* { box-sizing: border-box; }
body {
  margin: 0;
  height: 100vh;
  display: flex;
  flex-direction: column;
  overflow: hidden;
  background: #f2f2f2;
  color: #444;
  font: 12px/16px "Open Sans", "Noto Sans CJK SC", sans-serif;
}
button, input, select {
  margin: 0;
  padding: 0;
  border: 0;
  background: none;
  font: inherit;
  color: inherit;
}
button { display: flex; align-items: center; white-space: nowrap; }
svg { display: block; flex: none; }
.ln { fill: none; stroke: #444; stroke-width: 1; }
.ln.pale { stroke: #aaa; }
.ln.gray { stroke: #888; }
.ln.blk { stroke: #000; stroke-width: 1.3; }
.gl { stroke: #5aa578; }
.g { stroke: #5aa578; fill: #e0f0e5; }
.m { stroke: #5aa578; fill: #a9d2b8; }
.green { color: #3f9d68; }
.grow { flex: 1; }
.caret {
  flex: none;
  width: 6px;
  border: 3px solid transparent;
  border-top: 4px solid #888;
  border-bottom: 0;
}
.vsep { flex: none; width: 1px; height: 24px; background: #d4d4d4; }
.vsep.short { height: 18px; background: #c4c6ca; }

/* window title and document tabs */
.titlebar {
  flex: none;
  display: flex;
  align-items: center;
  height: 30px;
  padding-top: 2px;
  background: #f1f3f7;
  box-shadow: inset 0 -1px #bcc4d0;
}
.tab { display: flex; align-items: center; height: 29px; margin-top: -2px; padding-top: 2px; }
.tab-home { width: 72px; justify-content: center; background: #678ef1; color: #fff; }
.tab-docer { width: 119px; padding-left: 14px; gap: 4px; background: #e1e4ee; color: #333; }
.tab-file {
  width: 250px;
  height: 30px;
  padding: 1px 11px 0 9px;
  gap: 4px;
  background: #f2f3f5;
  border: 1px solid #b9c0cc;
  border-bottom: 0;
  color: #4caf50;
}
.dot { width: 6px; height: 6px; margin-left: 9px; border-radius: 50%; background: #d9985a; }
.newtab { padding: 0 17px; }
.count {
  width: 21px;
  margin-right: 11px;
  border-right: 4px double #888;
  height: 16px;
  background: #6b6b6b;
  color: #fff;
  text-align: center;
}
.count b { font-weight: 400; }
.login {
  height: 22px;
  margin: 0 12px;
  padding: 0 3px 0 9px;
  gap: 4px;
  border-radius: 11px;
  background: #cf5459;
  color: #fff;
}
.titlebar .win { width: 30px; justify-content: center; }
.titlebar .vsep:last-of-type { margin-right: 17px; }

/* menu */
.menubar { flex: none; display: flex; align-items: center; height: 37px; padding-top: 2px; }
.filebtn { padding: 0 8px 0 16px; gap: 6px; color: #333; }
.filebtn .chev { margin-left: 2px; }
.quick { display: flex; margin: 0 5px 0 4px; }
.quick button { width: 25px; justify-content: center; }
.menu { height: 20px; padding: 0 13px; color: #444; }
.menu.on { margin: 0 3px; padding: 0 10px; border-radius: 10px; background: #57b757; color: #fff; font-weight: 700; }
.menu.wide { padding: 0 14px 0 15px; }
.menu.dark { color: #000; }
.menu.find { gap: 1px; }
.side { gap: 5px; margin-right: 10px; }
.sync { margin-right: 8px; }
.addnote { margin-left: 6px; margin-right: 12px; }
.help { margin-right: 20px; }
.more { margin-right: 17px; }
.fold { margin-right: 14px; }

/* ribbon */
.ribbon {
  flex: none;
  display: flex;
  height: 66px;
  padding-top: 3px;
  border-bottom: 1px solid #cfcfcf;
}
.group { position: relative; display: flex; height: 58px; border-right: 1px solid #dcdcdc; }
.corner {
  position: absolute;
  right: 5px;
  bottom: 1px;
  width: 5px;
  height: 5px;
  border: solid #777;
  border-width: 0 1px 1px 0;
}
.big { flex-direction: column; height: 50px; color: #444; }
.big svg { height: 24px; margin: 3px 0 5px; }
.big span { display: flex; align-items: center; gap: 2px; }
.off { color: #aaa; }
.off .ln { stroke: #aaa; }
.off .caret { border-top-color: #bbb; }
.clip { padding: 0 10px 0 12px; gap: 10px; }
.stack { display: flex; flex-direction: column; gap: 2px; margin-left: 4px; }
.small { height: 24px; gap: 4px; }
.font, .number { flex-direction: column; gap: 2px; }
.font { width: 265px; padding-left: 5px; }
.row { display: flex; height: 24px; align-items: center; }
.combo { position: relative; display: flex; align-items: center; height: 24px; border: 1px solid #c8c8c8; background: #fafafa; padding-right: 3px; }
.combo select { flex: 1; width: 0; height: 22px; padding-left: 5px; appearance: none; outline: none; }
.combo.name { width: 122px; border-radius: 4px 0 0 4px; }
.combo.size { width: 71px; margin: 0 2px 0 -1px; border-radius: 0 4px 4px 0; }
.combo.size select { padding-left: 3px; }
.combo.fmt { width: 139px; border-radius: 4px; }
.tool { width: 25px; height: 24px; justify-content: center; }
.tool.drop { width: 36px; gap: 5px; }
.align { padding: 0 9px 0 4px; }
.pads { display: grid; grid-template-columns: repeat(5, 24px); grid-auto-rows: 24px; gap: 2px; margin-right: 10px; }
.pads button { justify-content: center; border-radius: 3px; }
.pads .on { background: #c3c3c3; }
.merge { margin-right: 7px; padding: 0 4px; border: 2px solid #c3c3c3; border-radius: 2px; background: linear-gradient(#c3c3c3 27px, #f5f5f5 27px); }
.merge svg { margin: 1px 0 5px; }
.number { padding: 0 4px 0 6px; }
.number .tool { margin-right: 1px; }
.number .tool.drop { width: 34px; }
.digits { flex-direction: column; font: 10px/9px "Liberation Mono", monospace; color: #222; }
.digits small { font-size: 10px; line-height: 9px; }
.digits em { font-style: normal; font-family: "DejaVu Sans", sans-serif; font-size: 8px; }
.tools { padding: 0 12px; gap: 12px; }
.tools + .tools { padding: 0 11px 0 10px; }
.tools.last { padding-left: 9px; gap: 13px; }

/* name box and formula */
.formula { flex: none; display: flex; align-items: center; height: 42px; padding: 4px 3px 0 8px; background: #e6e6e6; }
.namebox { display: flex; align-items: center; width: 149px; height: 24px; padding-right: 3px; background: #fff; border: 1px solid #ccc; border-radius: 4px; }
.namebox input { flex: 1; width: 0; padding-top: 2px; text-align: center; font: 13px/20px "Liberation Mono", monospace; }
.look { margin: 0 11px 0 46px; }
.fx { width: 23px; font: italic 17px/20px "Liberation Serif", serif; }
.expr { flex: 1; height: 24px; padding-left: 11px; background: #fff; border: 1px solid #ccc; border-radius: 4px; font-size: 15px; color: #000; }

/* worksheet */
.sheet { flex: 1; min-height: 0; display: flex; background: #e6e6e6; }
.canvas { position: relative; flex: 1; min-width: 0; overflow: hidden; background: #fff; border-right: 1px solid #ccc; }
.grid { width: 1850px; table-layout: fixed; border-collapse: separate; border-spacing: 0; }
.grid th {
  padding: 0;
  background: #e6e6e6;
  border-right: 1px solid #bbb;
  border-bottom: 1px solid #d0d0d0;
  color: #777;
  font: 14px/17px "Open Sans", sans-serif;
  text-align: center;
}
.grid thead th { height: 23px; border-bottom-color: #b4b4b4; border-right-color: #c4c4c4; }
.grid thead th.all { background: linear-gradient(135deg, transparent 50%, #b5b5b5 50%) 18px 6px / 11px 11px no-repeat #e6e6e6; }
.grid th.sel { background: #d3d3d3; color: #4caf50; }
.grid thead th.sel { border-bottom: 2px solid #4caf50; }
.grid tbody th.sel { border-right: 2px solid #4caf50; }
.grid tr { height: 22px; }
.grid tr.tall { height: 80px; }
.grid tr.low { height: 18px; }
.grid tr.low th { line-height: 15px; }
.grid td {
  padding: 0 2px;
  border-right: 1px solid #d4d4d4;
  border-bottom: 1px solid #d4d4d4;
  color: #000;
  font: 15px/17px "Noto Sans CJK SC", sans-serif;
  white-space: nowrap;
}
.grid td.num { padding-top: 3px; font: 13px/17px "Liberation Mono", monospace; text-align: right; }
.grid td b { font: 13px/17px "Liberation Mono", monospace; }
.grid td.mid { text-align: center; }
.grid td.gray { background: #d9d9d9; }
.grid td.pink { background: #f4c7b0; }
.grid td.yellow { background: #fbe69b; }
.grid td.box { border-color: #000; }
.grid td.before { border-right-color: #000; }
.grid td.over { border-bottom-color: #000; }
.grid td.selected { position: relative; }
.selection { position: absolute; inset: -2px; border: 3px solid #53b152; }
.selection::after {
  content: "";
  position: absolute;
  right: -5px;
  bottom: -5px;
  width: 7px;
  height: 7px;
  background: #53b152;
  border: solid #fff;
  border-width: 1px 0 0 1px;
}
.cursor { position: absolute; left: 1619px; top: 325px; }
.vscroll { flex: none; width: 16px; display: flex; flex-direction: column; align-items: center; background: #dedede; }
.grip { width: 10px; height: 4px; margin: 6px 0 10px; border: solid #aaa; border-width: 1px 0; }
.arrow { width: 6px; border: 3px solid transparent; }
.arrow.up { margin: 2px 0 8px; border-bottom: 4px solid #777; border-top: 0; }
.arrow.down { margin: 9px 0; border-top: 4px solid #777; border-bottom: 0; }
.thumb { flex: 1; width: 13px; background: #f4f4f4; border: 1px solid #aaa; border-radius: 7px; }

/* sheet tabs */
.sheetbar { flex: none; display: flex; align-items: center; height: 22px; background: #e6e6e6; border-top: 1px solid #ccc; }
.navs { width: 120px; padding-left: 16px; }
.navs .ln { stroke: #d0d0d0; }
.stab { height: 21px; padding: 0 14px 0 17px; background: #cecece; border-right: 1px solid #bbb; color: #444; }
.stab.on { background: #fff; color: #4caf50; font-weight: 700; }
.addsheet { padding: 0 6px; }
.hscroll { width: 768px; display: flex; align-items: center; gap: 7px; margin-right: 22px; }
.vgrip { width: 3px; height: 10px; border: solid #aaa; border-width: 0 1px; }
.track { flex: 1; display: flex; align-items: center; background: #dedede; }
.hthumb { flex: 1; height: 14px; background: #f2f2f2; border: 1px solid #a8a8a8; border-radius: 7px; }
.arrow.left { width: 4px; margin: 0 8px 0 7px; border-right: 4px solid #777; border-left: 0; }
.arrow.right { width: 4px; margin: 0 7px 0 34px; border-left: 4px solid #777; border-right: 0; }

/* status bar */
.status { flex: none; display: flex; align-items: center; height: 28px; padding: 0 16px 0 15px; color: #666; }
.status > .vsep:first-of-type { margin: 0 150px 0 14px; background: #e0e0e0; }
.views { display: flex; gap: 2px; margin-right: 9px; }
.views button { width: 24px; height: 24px; justify-content: center; border-radius: 3px; }
.views .on { background: #c3c3c3; }
.views .withcaret { width: 30px; gap: 3px; }
.pct { gap: 4px; margin: 0 10px 0 9px; font-size: 13px; }
.zb .ln { stroke: #666; }
.zoom { width: 138px; height: 12px; margin: 0 11px; appearance: none; background: linear-gradient(90deg, #888 50%, #ccc 50%) center / 100% 1px no-repeat; }
.zoom::-webkit-slider-thumb { appearance: none; width: 12px; height: 12px; border: 1px solid #777; border-radius: 50%; background: #f4f4f4; }

/* system taskbar */
.taskbar { flex: none; display: flex; height: 40px; background: #d4d4d4; color: #000; }
.start { width: 49px; justify-content: center; }
.search { display: flex; align-items: center; width: 342px; gap: 11px; padding-left: 11px; background: #fff; border: solid #c6c6c6; border-width: 1px 0; }
.search input { flex: 1; width: 0; font-size: 14px; line-height: 20px; }
.search input::placeholder { color: #222; opacity: 1; }
.apps { display: flex; gap: 1px; margin-left: 4px; }
.apps button { width: 48px; justify-content: center; background: linear-gradient(#e8921e, #e8921e) bottom / 40px 2px no-repeat; }
.apps .on { background: linear-gradient(#e8921e, #e8921e) bottom / 100% 2px no-repeat #efefef; }
.tray { display: flex; align-items: center; margin-right: 4px; padding-right: 19px; border-right: 1px solid #aaa; }
.lang { width: 22px; text-align: center; font-size: 15px; line-height: 20px; font-weight: 500; }
.ime { width: 16px; height: 16px; margin-left: 11px; border: 1px solid #000; background: #fff; font-size: 12px; line-height: 14px; text-align: center; }
.clock { width: 94px; text-align: center; line-height: 19px; }
.note { margin: 2px 0 0; }
```
